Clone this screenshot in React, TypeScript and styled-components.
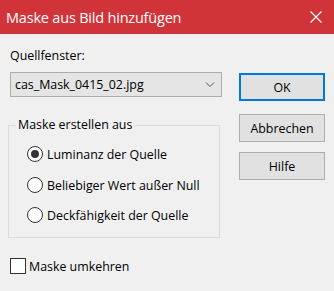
import React from "react";
import styled, { createGlobalStyle } from "styled-components";

const Global = createGlobalStyle`
  html, body { margin: 0; padding: 0; background: #f0f0f0; }
  body { font-family: "Open Sans", "Noto Sans", sans-serif; }
`;

const Dialog = styled.div`
  width: 334px;
  height: 291px;
  background: #f0f0f0;
  display: flex;
  flex-direction: column;
  overflow: hidden;
`;

const TitleBar = styled.div`
  height: 34px;
  flex: none;
  background: #d13438;
  color: #fff;
  display: flex;
  align-items: center;
  justify-content: space-between;
  padding: 0 12px 0 6px;
  font-size: 14.5px;
  font-family: "Open Sans", sans-serif;
  letter-spacing: -0.2px;
`;

const Body = styled.div`
  display: grid;
  grid-template-columns: 212px 86px;
  column-gap: 17px;
  padding: 14px 0 0 10px;
  font-size: 12.4px;
  color: #000;
  font-family: "Open Sans", sans-serif;
`;

const LeftCol = styled.div`
  display: flex;
  flex-direction: column;
`;

const RightCol = styled.div`
  display: flex;
  flex-direction: column;
  padding-top: 25px;
`;

const Label = styled.div`
  height: 16px;
  line-height: 16px;
  margin-bottom: 8px;
`;

const Select = styled.div`
  height: 25px;
  box-sizing: border-box;
  border: 1px solid #adadad;
  background: #e5e5e5;
  display: flex;
  align-items: center;
  justify-content: space-between;
  padding: 0 6px 0 4px;
`;

const GroupBox = styled.fieldset`
  margin: 20px 0 0 -2px;
  width: 212px;
  height: 121px;
  box-sizing: border-box;
  border: 1px solid #dcdcdc;
  padding: 0 0 0 18px;
  display: flex;
  flex-direction: column;
`;

const Legend = styled.legend`
  padding: 0 2px;
  margin-left: -11px;
  font-size: 12.4px;
  line-height: 16px;
`;

const RadioRow = styled.div<{ $gap: number }>`
  display: flex;
  align-items: center;
  gap: 4px;
  height: 18px;
  margin-top: ${(p) => p.$gap}px;
`;

const Radio = styled.span<{ $checked?: boolean }>`
  width: 16px;
  height: 16px;
  box-sizing: border-box;
  border-radius: 50%;
  border: 1.3px solid #333;
  background: #fff;
  display: flex;
  align-items: center;
  justify-content: center;
  &::after {
    content: "";
    display: ${(p) => (p.$checked ? "block" : "none")};
    width: 8px;
    height: 8px;
    border-radius: 50%;
    background: #333;
  }
`;

const CheckRow = styled.div`
  display: flex;
  align-items: center;
  gap: 3px;
  height: 18px;
  margin-top: 19px;
`;

const CheckBox = styled.span`
  width: 16px;
  height: 16px;
  box-sizing: border-box;
  border: 1px solid #333;
  background: #fff;
`;

const Button = styled.div<{ $primary?: boolean; $gap?: number }>`
  height: 28px;
  margin-top: ${(p) => p.$gap ?? 0}px;
  box-sizing: border-box;
  border: ${(p) => (p.$primary ? "2px solid #0078d7" : "1px solid #adadad")};
  background: #e1e1e1;
  display: flex;
  align-items: center;
  justify-content: center;
  font-size: 12.4px;
`;

const Chevron = () => (
  <svg width="10" height="6" viewBox="0 0 10 6">
    <path d="M1 0.5 L5 4.5 L9 0.5" fill="none" stroke="#555" strokeWidth="1" />
  </svg>
);

const Close = () => (
  <svg width="12" height="12" viewBox="0 0 12 12">
    <path d="M0.5 0.5 L11.5 11.5 M11.5 0.5 L0.5 11.5" stroke="#fff" strokeWidth="1.2" />
  </svg>
);

export default function App() {
  return (
    <>
      <Global />
      <Dialog>
        <TitleBar>
          <span>Maske aus Bild hinzufügen</span>
          <Close />
        </TitleBar>
        <Body>
          <LeftCol>
            <Label>Quellfenster:</Label>
            <Select>
              <span>cas_Mask_0415_02.jpg</span>
              <Chevron />
            </Select>
            <GroupBox>
              <Legend>Maske erstellen aus</Legend>
              <RadioRow $gap={12}>
                <Radio $checked />
                <span>Luminanz der Quelle</span>
              </RadioRow>
              <RadioRow $gap={13}>
                <Radio />
                <span>Beliebiger Wert außer Null</span>
              </RadioRow>
              <RadioRow $gap={12}>
                <Radio />
                <span>Deckfähigkeit der Quelle</span>
              </RadioRow>
            </GroupBox>
            <CheckRow>
              <CheckBox />
              <span>Maske umkehren</span>
            </CheckRow>
          </LeftCol>
          <RightCol>
            <Button $primary>OK</Button>
            <Button $gap={13}>Abbrechen</Button>
            <Button $gap={10}>Hilfe</Button>
          </RightCol>
        </Body>
      </Dialog>
    </>
  );
}
